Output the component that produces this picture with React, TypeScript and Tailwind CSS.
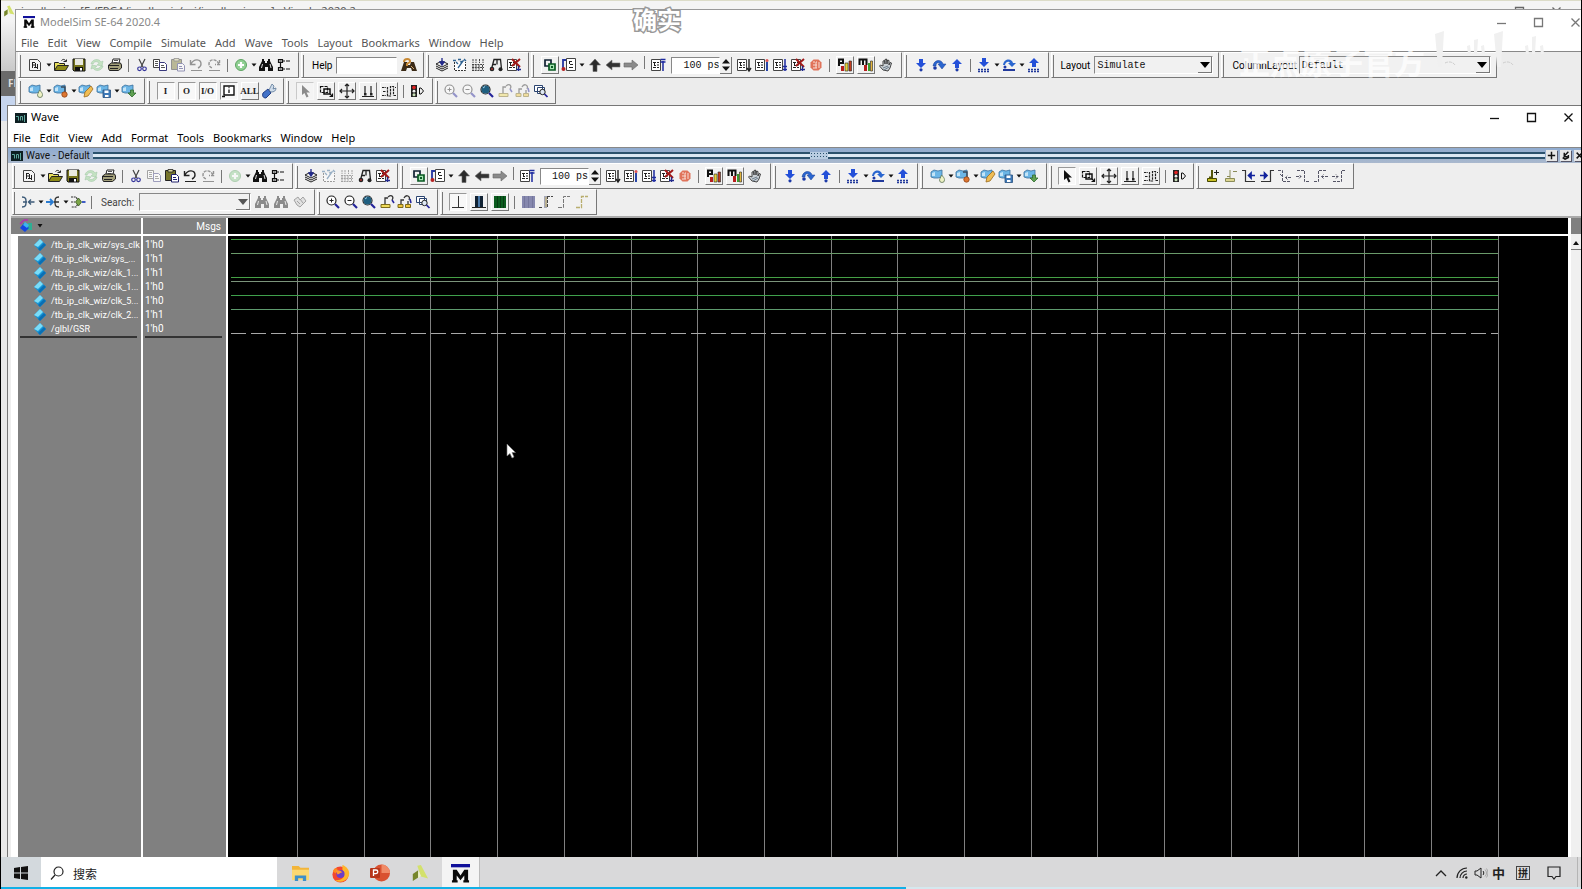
import type { ReactNode } from "react";

/* ── Icon drawings, all on a 16x16 grid ── */

const sheet = (
  <>
    <path d="M1.500 2.500h9v11h-9z" fill="#fff" stroke="#444" />
    <path d="M3 5.500h3M4 8.500h2M3 10.500h3M4.500 5v3M7 5.500h2M7 8h2M7 10.500h2" stroke="#222" fill="none" />
  </>
);

const screen = (
  <>
    <path d="M1 4l3-2 4 1 4-1v7l-4 1H4l-3-1z" fill="#6cb6e6" stroke="#3a6f9c" strokeWidth=".8" />
    <path d="M2 5l3-1v4L2 8z" fill="#c3e4f7" />
  </>
);

const lens = (
  <>
    <circle cx="6.500" cy="6.500" r="4.500" fill="#fff" stroke="#222" strokeWidth="1.200" />
    <path d="M10 10l4 4" stroke="#23239a" strokeWidth="2.200" />
  </>
);

const baseStep = <path d="M2 12.500h12M2 14.500h12" stroke="#223a9c" strokeWidth="1.500" strokeDasharray="2 1" />;

const icons: Record<string, ReactNode> = {
  new: (
    <>
      <path d="M2.500 2.500h8l3 3v8h-11z" fill="#f4f4f4" stroke="#444" />
      <path d="M5.500 5v6M5 5.500h3M5 8h3M8.500 6v5M10.500 7v5M7 10.500h3" stroke="#222" fill="none" />
    </>
  ),
  open: (
    <>
      <path d="M1.500 13V5.500h4l1 1h5V9" fill="#e8df5a" stroke="#222" />
      <path d="M1.500 13.500l3-5h11l-3 5z" fill="#8d8a17" stroke="#222" />
      <path d="M8.500 3.500c2-2 4-1 4 1M10.500 4.500h3v-2" fill="none" stroke="#222" />
    </>
  ),
  save: (
    <>
      <path d="M2 2h12v12H3l-1-1z" fill="#77751c" stroke="#111" />
      <path d="M4 2h8v6H4z" fill="#e9e9e0" />
      <path d="M4 10h8v4H4z" fill="#111" />
      <path d="M9 11h2v2.500H9z" fill="#fff" />
    </>
  ),
  refresh: (
    <>
      <path d="M2 7c1-5 8-6 10-2l2-1-1 5-5-1 2-1.500C9 4 5 4 4 7z" fill="#8ed08b" stroke="#4c9c55" strokeWidth=".6" />
      <path d="M14 9c-1 5-8 6-10 2l-2 1 1-4 5 1-2 1.500c1 2 5 1 6-1.500z" fill="#8ed08b" stroke="#4c9c55" strokeWidth=".6" />
    </>
  ),
  print: (
    <>
      <path d="M5 6l1-4h7l-1 4" fill="#fff" stroke="#222" />
      <path d="M7 3.500h4M6.500 5.500h4" stroke="#555" />
      <path d="M1.500 8l3-2h9l1 2v3l-3 2.500h-9l-1-2z" fill="#a29f7a" stroke="#222" />
      <path d="M2 8.500h10M3 11.500h8" stroke="#222" />
    </>
  ),
  cut: (
    <>
      <path d="M5 2l4 8M11 2l-4 8" stroke="#444" strokeWidth="1.200" />
      <circle cx="5.500" cy="11.800" r="1.800" fill="none" stroke="#33339a" strokeWidth="1.200" />
      <circle cx="10.500" cy="11.800" r="1.800" fill="none" stroke="#33339a" strokeWidth="1.200" />
    </>
  ),
  copy: (
    <>
      <path d="M1.500 2.500h6v8h-6z" fill="#fff" stroke="#444" />
      <path d="M7.500 5.500h5l2 2v6h-7z" fill="#fff" stroke="#39397d" />
      <path d="M3 4.500h3M3 6.500h3M3 8.500h3M9 8.500h3M9 10.500h4" stroke="#555" />
    </>
  ),
  paste: (
    <>
      <path d="M1.500 2.500h10v10h-10z" fill="#77752c" stroke="#222" />
      <path d="M4 1.500h5V4H4z" fill="#d6d19a" stroke="#222" strokeWidth=".8" />
      <path d="M7.500 6.500h5l2 2v5.500h-7z" fill="#fff" stroke="#22226d" />
      <path d="M9 9.500h3M9 11.500h4" stroke="#22226d" />
    </>
  ),
  undo: (
    <>
      <path d="M2.500 3v4.500h5M3 7c3-6 10-5 10 0 0 2-1 3-3 4" fill="none" stroke="#222" strokeWidth="1.400" />
      <path d="M3 13.500h11" stroke="#222" />
    </>
  ),
  redo: (
    <>
      <path d="M13.500 3v4.500H9M13 7C10 1 3 2 3 7c0 2 1 3 3 4" fill="none" stroke="#222" strokeWidth="1.400" strokeDasharray="3 1" />
      <path d="M3 13.500h11" stroke="#222" />
    </>
  ),
  plus: (
    <>
      <circle cx="8" cy="8" r="5.500" fill="#8fcf92" stroke="#5fa463" />
      <path d="M8 5v6M5 8h6" stroke="#fff" strokeWidth="2.200" />
    </>
  ),
  find: (
    <>
      <path d="M4 2h2v2h1v2h2V4h1V2h2v2l3 6v4h-5v-4H7v4H1v-4l3-6z" fill="#111" />
      <path d="M4.500 7l-1 4M12 7l1 4" stroke="#ddd" />
    </>
  ),
  tree: (
    <path
      d="M2.500 2.500h4v3h-4zM2.500 10.500h4v3h-4zM4.500 5.500v5M7 4h2M10 4h4M7 12h2M10 12h4M3.500 4h2M3.500 12h2"
      fill="none"
      stroke="#111"
      strokeWidth="1.200"
    />
  ),
  helpfind: (
    <>
      <path d="M3 5h3l1 3h2l1-3h3l3 9h-5l-1-3H6l-1 3H0z" fill="#3b2a16" />
      <path d="M3 5c0-4 7-4 6 0L6 7v2" fill="none" stroke="#c98a35" strokeWidth="2" />
      <path d="M10 9l3 3" stroke="#d3a76b" />
    </>
  ),
  compile: (
    <>
      <path d="M2 7l6-3 6 3-6 3z" fill="#eee" stroke="#222" />
      <path d="M2 9l6 3 6-3M2 11l6 3 6-3" fill="none" stroke="#222" />
      <path d="M8 1v5M6 5l2 3 2-3z" stroke="#222a8c" fill="#222a8c" strokeWidth="1.300" />
    </>
  ),
  compileall: (
    <>
      <path d="M2.500 5v8.500h11V5" fill="#fff" stroke="#333" strokeDasharray="2 1" />
      <path d="M1 3.500h3M6 2.500h3M12 2l2 2M8 5l3-1-5 7M4 5l2 2" fill="none" stroke="#2f6291" strokeWidth="1.300" />
    </>
  ),
  simulate: (
    <path
      d="M2 7.500h12M2 10.500h12M2 13.500h12M3 2v4M6 2v4M9.500 2v4M13 2v4M3 8v5M6 8v5M9 8v5M12.500 8v5"
      stroke="#444"
      fill="none"
      strokeDasharray="2 .7"
    />
  ),
  car: (
    <>
      <path d="M3.500 12L6 2.500h6.500l1 9.500M5 7.500h3M9 2.500v5" fill="#eee" stroke="#222" strokeWidth="1.300" />
      <circle cx="4" cy="12" r="2.300" fill="#222" />
      <circle cx="12.500" cy="12.300" r="2" fill="#222" />
      <circle cx="4" cy="12" r="1" fill="#a33" />
    </>
  ),
  stopdoc: (
    <>
      {sheet}
      <path d="M6 2l8 8M14 2L6 9" stroke="#a01818" strokeWidth="2" />
      <path d="M12.500 9v5M10 12.500h5" stroke="#222a8c" strokeWidth="1.300" />
    </>
  ),
  squares: (
    <>
      <path d="M3 3h6v6H3z" fill="none" stroke="#123" strokeWidth="1.700" />
      <path d="M7 7h6v6H7z" fill="#a7e4b3" stroke="#0a5a23" strokeWidth="1.700" />
      <path d="M9 9h2v2H9z" fill="#0a5a23" />
    </>
  ),
  restart: (
    <>
      <path d="M5.500 1.500h9v12h-9z" fill="#fff" stroke="#444" />
      <path d="M8 4.500h3M9 7.500h3M8 10.500h4M8.500 5v2" stroke="#222" />
      <path d="M5 3H2v8" fill="none" stroke="#2436a0" strokeWidth="1.800" />
      <circle cx="2.500" cy="12" r="2" fill="#b52222" />
    </>
  ),
  up: <path d="M8 2l5.500 6H10v6.500H6V8H2.500z" fill="#2b2b2b" stroke="#666" strokeWidth=".6" />,
  left: <path d="M1 8l6-5v3h8v4H7v3z" fill="#333" stroke="#777" strokeWidth=".6" />,
  right: <path d="M15 8L9 3v3H1v4h8v3z" fill="#8a8a8a" stroke="#666" strokeWidth=".6" />,
  doctop: (
    <>
      {sheet}
      <path d="M13 4v10M10.500 2.500h5M10.500 5h5" stroke="#1d2aa0" strokeWidth="1.500" />
    </>
  ),
  run: (
    <>
      {sheet}
      <path d="M13 2v11M11 11l2 3 2-3" stroke="#222" fill="none" strokeWidth="1.400" />
    </>
  ),
  cont: (
    <>
      {sheet}
      <path d="M13 5v9" stroke="#2a47a8" strokeWidth="2" />
      <circle cx="13" cy="3.500" r="1.500" fill="#d55" />
    </>
  ),
  runall: (
    <>
      {sheet}
      <path d="M13 2v12M11 9.500h4M11 12.500h4" stroke="#1d2aa0" strokeWidth="1.500" />
    </>
  ),
  stop: (
    <>
      <path d="M5.500 2.500h5l3 3v5l-3 3h-5l-3-3v-5z" fill="#e0735a" />
      <path d="M5 5h2M8 5h1M11 5v6M5 8h4M5 11h4M8 5v6" stroke="#f9ddd4" fill="none" />
    </>
  ),
  profile: (
    <>
      <path d="M4 9h3v5H4z" fill="#b71e1e" />
      <path d="M8 6h3v8H8z" fill="#e8d23a" stroke="#222" strokeWidth=".6" />
      <path d="M12 4h2.500v10H12z" fill="#c33d1f" stroke="#222" strokeWidth=".6" />
      <path d="M2 9V2.500h4V6H2" fill="none" stroke="#111" strokeWidth="2" />
    </>
  ),
  memory: (
    <>
      <path d="M6 8h3v6H6z" fill="#b71e1e" />
      <path d="M10 6h2v8h-2z" fill="#3c9a2d" />
      <path d="M12.500 4h2v10h-2z" fill="#e3b53a" stroke="#222" strokeWidth=".6" />
      <path d="M1.500 8V2.500h7V8M5 3v5" fill="none" stroke="#111" strokeWidth="2" />
    </>
  ),
  hand: (
    <>
      <path
        d="M6 13L2.500 9l1-1L6 9V4l1.500-.5L8 7V2.500L9.500 2l.5 5 .5-4 1.500.5V8l1-2.500 1.500.5L13 11l-2 3z"
        fill="#c9cfd4"
        stroke="#333"
        strokeWidth=".9"
      />
      <path d="M6 11l5-2M7 13l5-3" stroke="#6c7d8c" />
    </>
  ),
  stepin: (
    <>
      <path d="M6 2h4v4h3l-5 5-5-5h3z" fill="#2450d8" />
      <circle cx="8" cy="12.800" r="1.600" fill="#1d3aa8" />
    </>
  ),
  stepover: (
    <>
      <path d="M2 9C3 2 11 2 12 7h3l-4 5-4-5h2C8 5 5 5 5 9z" fill="#2a66cf" stroke="#1d3f94" strokeWidth=".5" />
      <circle cx="4" cy="11" r="1.800" fill="#1d3aa8" />
    </>
  ),
  stepout: (
    <>
      <path d="M8 2l5 5h-3v4H6V7H3z" fill="#2450d8" />
      <circle cx="8" cy="12.800" r="1.600" fill="#1d3aa8" />
    </>
  ),
  stepinc: (
    <>
      <path d="M6 1h4v4h3l-5 5-5-5h3z" fill="#2450d8" />
      {baseStep}
    </>
  ),
  stepoverc: (
    <>
      <path d="M2 8C3 1 11 1 12 6h3l-4 4-4-4h2C8 4 5 4 4 8z" fill="#2a66cf" />
      <circle cx="4" cy="10" r="1.500" fill="#1d3aa8" />
      <path d="M2 13h12" stroke="#223a9c" strokeWidth="2" />
    </>
  ),
  stepoutc: (
    <>
      <path d="M8 1l5 5h-3v4H6V6H3z" fill="#2450d8" />
      {baseStep}
    </>
  ),
  winnew: (
    <>
      {screen}
      <path d="M11.500 7c3 3 3 4 3 5a2.500 2.500 0 01-5 0c0-1 1-2 2-5z" fill="#eef2c4" stroke="#5d7355" strokeWidth=".8" />
    </>
  ),
  windel: (
    <>
      {screen}
      <path d="M8 4h4v5" fill="none" stroke="#36495c" strokeWidth="1.500" />
      <circle cx="11.500" cy="11.500" r="2.700" fill="#dd7631" stroke="#8f4215" strokeWidth=".8" />
    </>
  ),
  winedit: (
    <>
      {screen}
      <path d="M6 14l1-5 6-6 2 3-5 7z" fill="#f0bd54" stroke="#9a6b1d" strokeWidth=".8" />
    </>
  ),
  winsave: (
    <>
      {screen}
      <path d="M7 7h7.500v7.500H7z" fill="#3d79b8" stroke="#28517d" strokeWidth=".8" />
      <path d="M8.500 7.500h4v2.500h-4zM9 12h3.500v2H9z" fill="#fff" />
    </>
  ),
  winload: (
    <>
      {screen}
      <path d="M9.500 7h3v3H15l-4 4-4-4h2.500z" fill="#5fa052" stroke="#2f6b2c" strokeWidth=".8" />
    </>
  ),
  inout: (
    <>
      <path d="M3 3h10v9H3z" fill="#fff" stroke="#111" strokeWidth="1.400" />
      <path d="M8 6.500v3.500M7.500 4.500h1M1 13.500h3" stroke="#111" strokeWidth="1.300" />
    </>
  ),
  wrench: (
    <>
      <path d="M2 10l5-4 3 4-5 5c-3 0-4-2-3-5z" fill="#4272c8" stroke="#233f86" />
      <path d="M8 7l3-6 2 2-1 3 3-1c0 3-2 4-5 4z" fill="#cfdcea" stroke="#5b7797" strokeWidth=".8" />
    </>
  ),
  clean: (
    <path
      d="M2 6l4-3 2 3 3-3 3 4-6 6-3-2zM5 7l3 3M8 5l3 4"
      fill="#ccc"
      stroke="#444"
    />
  ),
  arrow: <path d="M5 2v10l2.500-2 2 4.500 2-1-2-4H13z" fill="#111" />,
  zoombox: (
    <>
      <path d="M2.500 3.500h7v6h-7z" fill="none" stroke="#111" strokeWidth="1.200" strokeDasharray="3 1" />
      <path d="M6 6h6v5H6z" fill="none" stroke="#111" strokeWidth="1.500" />
      <path d="M12 11l2.500 2.500M14.500 10.500v3h-3" stroke="#111" fill="none" strokeWidth="1.200" />
    </>
  ),
  pan: (
    <path
      d="M8 1v14M1 8h14M6 3l2-2 2 2M6 13l2 2 2-2M3 6L1 8l2 2M13 6l2 2-2 2"
      stroke="#222"
      strokeWidth="1.200"
      fill="none"
    />
  ),
  cursors: (
    <>
      <path d="M5 3v8M11 3v8M2 13.500h12" stroke="#222" strokeWidth="1.200" />
      <path d="M4 10h2.500v2.500H4zM10 10h2.500v2.500H10z" fill="#222" />
    </>
  ),
  edges: (
    <path
      d="M1 4.500h4M1 12.500h4M6.500 4v9h3V3.500h3v9M2 8.500h3M14 4.500h1M13 12.500h2"
      stroke="#222"
      strokeWidth="1.200"
      fill="none"
      strokeDasharray="2.500 .8"
    />
  ),
  traffic: (
    <>
      <path d="M2 2h6v12H2z" fill="#222" />
      <circle cx="5" cy="4.500" r="1.800" fill="#e02222" />
      <circle cx="5" cy="8.200" r="1.400" fill="#eee" />
      <circle cx="5" cy="11.800" r="1.500" fill="#c7dfb5" />
      <path d="M10.500 5h1.500l2.500 3-2.500 3h-1.500z" fill="none" stroke="#111" />
    </>
  ),
  zoomin: (
    <>
      {lens}
      <path d="M6.500 4.500v4M4.500 6.500h4" stroke="#222" />
    </>
  ),
  zoomout: (
    <>
      {lens}
      <path d="M4.500 6.500h4" stroke="#222" />
    </>
  ),
  zoomfull: (
    <>
      {lens}
      <circle cx="6.500" cy="6.500" r="4" fill="#1f5f80" />
      <path d="M4 5l2-1.500" stroke="#a9d4ea" />
    </>
  ),
  zoomcur: (
    <>
      <path d="M2 10.500h9v3H2z" fill="#f0dc5a" stroke="#7d6b18" />
      <path d="M6 10V4h3M9 3c4-3 6 0 4 3" fill="none" stroke="#333" strokeWidth="1.300" />
      <path d="M13 6l2 3" stroke="#23239a" strokeWidth="1.500" />
    </>
  ),
  zoomcur2: (
    <>
      <path d="M1 10.500h5v3H1zM8.500 10.500h5v3h-5z" fill="#f0c63c" stroke="#7d6b18" />
      <path d="M4 10V6h3M11 10V7M7 4c2-4 7-2 5 2" fill="none" stroke="#333" strokeWidth="1.300" />
      <path d="M13 5l1 4" stroke="#23239a" strokeWidth="1.500" />
    </>
  ),
  zoomwin: (
    <>
      <path d="M1.500 2.500h8v6h-8zM4.500 4.500h7v6h-7z" fill="#fff" stroke="#2b4470" />
      <circle cx="9.500" cy="9" r="2.700" fill="#dfe9f5" stroke="#222" />
      <path d="M11.500 11l3 3" stroke="#23239a" strokeWidth="1.700" />
    </>
  ),
  expandl: (
    <path
      d="M2 3c4 0 4 2 4 5s0 5-4 5M3 8h4M14.500 8H9M11 5.500L8.500 8l2.500 2.500"
      fill="none"
      stroke="#3c5a78"
      strokeWidth="1.400"
    />
  ),
  expandr: (
    <>
      <path d="M1 8h6M5 5l3 3-3 3" fill="none" stroke="#2a7bd0" strokeWidth="1.800" />
      <path d="M14 3c-4 0-4 2-4 5s0 5 4 5M9 8h5" fill="none" stroke="#333" strokeWidth="1.300" />
    </>
  ),
  expandb: (
    <>
      <path d="M1 3h5l3 5-3 5H1M1 8h4" fill="none" stroke="#333" strokeWidth="1.200" strokeDasharray="2 .7" />
      <path d="M8.500 4l3 4-3 4-3-4z" fill="#7ba548" stroke="#35541c" strokeWidth=".8" />
      <path d="M12 8h3.500" stroke="#2a4bc0" strokeWidth="1.800" />
    </>
  ),
  line: <path d="M8.500 2v11M2 13.500h12" stroke="#333" />,
  barblue: (
    <>
      <path d="M4 2h8v11H4z" fill="#123" />
      <path d="M7 2h2v11H7z" fill="#4a78a8" />
      <path d="M1 13.500h14" stroke="#222" />
    </>
  ),
  bargreen: (
    <>
      <path d="M2 2h12v12H2z" fill="#0b5c1e" />
      <path d="M5.500 2v12M8.500 2v12M11.500 2v12" stroke="#063d12" />
    </>
  ),
  shade: (
    <>
      <path d="M2 2h13v12H2z" fill="#8688ae" />
      <path d="M4.500 2v12M8.500 2v12M12.500 2v12" stroke="#74769c" />
    </>
  ),
  half: (
    <>
      <path d="M6 2h3v12H6z" fill="#a5a7b8" />
      <path d="M1 13.500h4M9.500 2v12M9 2.500h6" stroke="#444" fill="none" strokeDasharray="3 1" />
      <path d="M8 3v10" stroke="#cbb668" />
    </>
  ),
  rise: <path d="M2 13.500h5.500v-11H14" stroke="#777" fill="none" strokeDasharray="4 1" />,
  risey: <path d="M2 13.500h5.500v-11H14" stroke="#b9ae6f" fill="none" strokeWidth="1.300" strokeDasharray="4 1" />,
  curadd: (
    <>
      <path d="M2.500 10.500h9v3h-9z" fill="#c8bf23" stroke="#444600" />
      <path d="M7 2v8M4 9.500h3" stroke="#55560a" strokeWidth="2" fill="none" />
      <path d="M11.500 2v5M9 4.500h5" stroke="#222" />
    </>
  ),
  curdel: (
    <>
      <path d="M2.500 10.500h9v3h-9z" fill="#ddd691" stroke="#8b8c5a" />
      <path d="M7 2v8M10 3.500h4M4 8.500h3" stroke="#8b8c5a" fill="none" />
    </>
  ),
  prevedge: (
    <>
      <path d="M1 2.500h3.500v11H14" fill="none" stroke="#333" strokeWidth="1.200" />
      <path d="M14 7.500H9M10 5L7.500 7.500 10 10z" stroke="#11229c" fill="#11229c" strokeWidth="1.700" />
    </>
  ),
  nextedge: (
    <>
      <path d="M2 13.500h9.500v-11H15" fill="none" stroke="#333" strokeWidth="1.200" />
      <path d="M1 7.500h5M5.500 5L8 7.500 5.500 10z" stroke="#11229c" fill="#11229c" strokeWidth="1.700" />
    </>
  ),
  fallprev: <path d="M1 2.500h4.500v11H14M3 6l3 3M14 9.500H8.500l2-2M8.500 9.500l2 2" fill="none" stroke="#556" strokeDasharray="3 1" />,
  fallnext: <path d="M2 2.500h7.500v11H15M1 8.500h5l-2-2M6 8.500l-2 2" fill="none" stroke="#556" strokeDasharray="3 1" />,
  riseprev: <path d="M1 13.500h4.500v-11H14M15 8.500H8.500l2-2M8.500 8.500l2 2" fill="none" stroke="#556" strokeDasharray="3 1" />,
  risenext: <path d="M2 13.500h8.500v-11H15M1 8.500h6l-2-2M7 8.500l-2 2" fill="none" stroke="#556" strokeDasharray="3 1" />,
};

const toggleText: Record<string, string> = { I: "I", O: "O", IO: "I/O", ALL: "ALL" };

/* ── Toolbar pieces ── */

// Items are space separated: "|" separator, "v" drop-down arrow, and
// name:state where state is dim, up (raised) or down (sunken).
function Tools({ items }: { items: string }) {
  return (
    <>
      {items.split(" ").map((item, i) => {
        if (item === "|") {
          return (
            <span key={i} className="flex w-[9px] shrink-0 justify-center">
              <span className="h-[13px] w-px bg-[#777]" />
            </span>
          );
        }
        if (item === "v") {
          return (
            <button key={i} aria-label="More" className="flex w-[7px] shrink-0 justify-center">
              <svg viewBox="0 0 6 4" className="h-1 w-1.5">
                <path d="M.5 .5h5L3 3.500z" fill="#111" />
              </svg>
            </button>
          );
        }
        const [name, ...states] = item.split(":");
        const dim = states.includes("dim") ? "opacity-45" : "";
        let box = name === "new" ? "w-5" : "w-[18px]";
        let face = "";
        if (states.includes("up")) {
          box = "w-[21px]";
          face = "border border-t-white border-l-white border-r-[#777] border-b-[#777]";
        }
        if (states.includes("down")) {
          box = "w-[21px]";
          face = "border border-t-[#999] border-l-[#999] border-r-white border-b-white bg-[#f8f8f8]";
        }
        return (
          <button key={i} aria-label={name} className={`flex h-[18px] shrink-0 items-center justify-center ${box}`}>
            <span className={`flex h-[18px] w-[18px] items-center justify-center ${face} ${dim}`}>
              {toggleText[name] ? (
                <span className="font-['Liberation_Serif',serif] text-[9px] leading-none font-bold text-[#222]">{toggleText[name]}</span>
              ) : (
                <svg viewBox="0 0 16 16" className="h-4 w-4 shrink-0" fill="none">
                  {icons[name]}
                </svg>
              )}
            </span>
          </button>
        );
      })}
    </>
  );
}

function Group({ children, className = "pl-1 pr-[5px]" }: { children: ReactNode; className?: string }) {
  return (
    <div className="flex h-[26px] shrink-0 border border-t-white border-r-[#777] border-b-[#777] border-l-white bg-[#f1f1f1]">
      <span className="mt-0.5 ml-px w-px bg-[#777]" />
      <div className={`flex items-center ${className}`}>{children}</div>
    </div>
  );
}

function Combo({ id, value, width, disabled }: { id: string; value: string; width: string; disabled?: boolean }) {
  return (
    <span className={`relative flex h-[18px] border border-t-[#888] border-r-white border-b-white border-l-[#888] ${width}`}>
      <select
        id={id}
        disabled={disabled}
        className="h-4 w-full appearance-none bg-[#f1f1f1] pt-px pl-0.5 font-['Liberation_Mono',monospace] text-[10px] leading-4 text-[#111]"
      >
        <option>{value}</option>
      </select>
      <span className="pointer-events-none absolute inset-y-0 right-0 flex w-[14px] items-center justify-center border-r border-b border-[#777] bg-[#f1f1f1]">
        <svg viewBox="0 0 10 6" className="h-1.5 w-2.5">
          <path d="M0 0h10L5 6z" fill={disabled ? "#555" : "#000"} />
        </svg>
      </span>
    </span>
  );
}

function RunLength({ label }: { label: string }) {
  return (
    <span className="mr-[3px] ml-1 flex h-[17px] items-center">
      <input
        aria-label={label}
        defaultValue="100 ps"
        className="h-full w-[49px] border border-t-[#888] border-r-white border-b-white border-l-[#888] bg-white text-right font-['Liberation_Mono',monospace] text-[10px] text-[#111]"
      />
      <button aria-label="Change run length" className="flex h-full w-3 items-center justify-center border-r border-b border-[#777]">
        <svg viewBox="0 0 8 14" className="h-[14px] w-2">
          <path d="M0 5.500h8L4 1zM0 8.500h8L4 13z" fill="#111" />
        </svg>
      </button>
    </span>
  );
}

function RunGroup({ label }: { label: string }) {
  return (
    <Group className="pr-[7px] pl-[5px]">
      <Tools items="squares:up restart v" />
      <span className="ml-px flex">
        <Tools items="up left right | doctop" />
      </span>
      <RunLength label={label} />
      <Tools items="run cont runall stopdoc stop | profile:up memory:up hand" />
    </Group>
  );
}

function StepGroup() {
  return (
    <Group className="px-[5px]">
      <Tools items="stepin stepover stepout | stepinc v stepoverc v stepoutc" />
    </Group>
  );
}

function LayoutGroup() {
  return (
    <Group className="px-1.5">
      <Tools items="winnew v windel v winedit winsave v winload" />
    </Group>
  );
}

function MenuBar({ items, className }: { items: string[]; className: string }) {
  return (
    <nav className={`flex bg-white pl-[5px] text-[11px] ${className}`}>
      {items.map((item) => (
        <button key={item}>{item}</button>
      ))}
    </nav>
  );
}

function WindowButtons({ className }: { className: string }) {
  return (
    <div className={`ml-auto flex gap-[11px] ${className}`}>
      {[
        ["Minimize", "M1 6.500h9"],
        ["Maximize", "M1.500 1.500h8v8h-8z"],
        ["Close", "M1.500 1.500l8 8M9.500 1.500l-8 8"],
      ].map(([label, d]) => (
        <button key={label} aria-label={label} className="flex h-5 w-[26px] items-center justify-center">
          <svg viewBox="0 0 11 11" className="h-[11px] w-[11px]" fill="none" stroke="currentColor" strokeWidth="1.300">
            <path d={d} />
          </svg>
        </button>
      ))}
    </div>
  );
}

function ModelSimLogo({ className }: { className: string }) {
  return (
    <svg viewBox="0 0 20 20" className={className}>
      <path d="M0 0h20v3.500H0z" fill="#10109a" />
      <path d="M2 19V6h4l4 6 4-6h4v13h-4v-7l-4 5-4-5v7z" fill="#0a0a0a" />
      <path d="M1 17h6v2.500H1zM13 17h6v2.500h-6z" fill="#0a0a0a" />
    </svg>
  );
}

function WaveLogo() {
  return (
    <svg viewBox="0 0 12 12" className="h-3 w-3 shrink-0">
      <path d="M0 1h12v10H0z" fill="#0d1f22" />
      <path d="M1 4.500h2.500v4M5.500 8.500v-4h2v4M9.500 3v7" fill="none" stroke="#5da79b" />
    </svg>
  );
}

function VivadoLogo({ className }: { className: string }) {
  return (
    <svg viewBox="0 0 20 20" className={className}>
      <path d="M2 11l6-4v8l-6 4z" fill="#76862b" />
      <path d="M7 2l4-1 8 15-8-2z" fill="#d3e16c" />
      <path d="M8 7l3 6-3 3z" fill="#eef3c4" />
    </svg>
  );
}

/* ── Windows ── */

function VivadoWindow() {
  return (
    <section className="absolute inset-0 bg-[#e9e9e9]">
      <header className="flex h-[20px] items-center bg-[#f4f4f4] pl-0.5 text-[11px] text-[#555]">
        <VivadoLogo className="h-3 w-3" />
        <span className="ml-1.5 whitespace-pre">ip_clk_wiz - [E:/FPGA/ip_clk_wiz/prj/ip_clk_wiz.xpr] - Vivado 2020.2</span>
        <WindowButtons className="mr-3 text-[#666]" />
      </header>
      <div className="h-[50px] bg-linear-to-b from-[#f4f4f4] to-[#c9c9c9]" />
      <div className="h-[25px] bg-[#6a6a6a] pl-[7px] text-[10px] leading-6 font-bold text-[#ddd]">FLOW</div>
      <div className="h-[25px] bg-[#c6d5ee]" />
    </section>
  );
}

const mainMenu = ["File", "Edit", "View", "Compile", "Simulate", "Add", "Wave", "Tools", "Layout", "Bookmarks", "Window", "Help"];

function MainWindow() {
  return (
    <section className="absolute top-2 -right-2 bottom-0 left-[14px] border border-[#999] bg-[#ececec]">
      <header className="flex h-6 items-center bg-white pl-[7px] text-[11px] text-[#888]">
        <ModelSimLogo className="h-3 w-3" />
        <span className="ml-[5px]">ModelSim SE-64 2020.4</span>
        <WindowButtons className="text-[#777]" />
      </header>
      <MenuBar items={mainMenu} className="gap-[9px] leading-[17px] text-[#555]" />
      <div className="border-t border-[#888] pl-0.5 font-[Roboto,sans-serif]">
        <div className="flex gap-0.5">
          <Group>
            <Tools items="new v open save refresh:dim print | cut copy paste:dim undo:dim redo:dim | plus v find tree" />
          </Group>
          <Group>
            <label htmlFor="help" className="mr-1 ml-1 text-[10px] text-black">
              Help
            </label>
            <input id="help" className="mr-[3px] h-[17px] w-[61px] border border-t-[#888] border-r-white border-b-white border-l-[#888] bg-white text-[10px]" />
            <Tools items="helpfind" />
          </Group>
          <Group>
            <Tools items="compile compileall simulate car stopdoc" />
          </Group>
          <RunGroup label="Run length" />
          <StepGroup />
          <Group>
            <label htmlFor="layout" className="mr-1 ml-0.5 text-[10px] text-black">
              Layout
            </label>
            <Combo id="layout" value="Simulate" width="w-[119px]" />
          </Group>
          <Group>
            <label htmlFor="columns" className="mr-0.5 ml-1 text-[10px] text-black">
              ColumnLayout
            </label>
            <Combo id="columns" value="Default" width="w-[192px]" />
          </Group>
        </div>
        <div className="flex gap-0.5">
          <LayoutGroup />
          <Group className="px-[5px]">
            <Tools items="I:down O:down IO:down inout:down ALL:up wrench" />
          </Group>
          <Group className="pr-1.5 pl-[5px]">
            <Tools items="arrow:down:dim zoombox:up pan:up cursors:up edges:up | traffic" />
          </Group>
          <Group>
            <Tools items="zoomin:dim zoomout:dim zoomfull zoomcur:dim zoomcur2:dim zoomwin" />
          </Group>
        </div>
      </div>
    </section>
  );
}

const waveMenu = ["File", "Edit", "View", "Add", "Format", "Tools", "Bookmarks", "Window", "Help"];

const signals = [
  { name: "/tb_ip_clk_wiz/sys_clk", value: "1'h0" },
  { name: "/tb_ip_clk_wiz/sys_...", value: "1'h1" },
  { name: "/tb_ip_clk_wiz/clk_1...", value: "1'h1" },
  { name: "/tb_ip_clk_wiz/clk_1...", value: "1'h0" },
  { name: "/tb_ip_clk_wiz/clk_5...", value: "1'h0" },
  { name: "/tb_ip_clk_wiz/clk_2...", value: "1'h1" },
  { name: "/glbl/GSR", value: "1'h0" },
];

const traces = [
  { y: 3, color: "#3fa03f" },
  { y: 17, color: "#6a9a6a" },
  { y: 41, color: "#45a045" },
  { y: 45, color: "#7b947b" },
  { y: 59, color: "#3fa04c" },
  { y: 73, color: "#5e9a6e" },
];

const gridLines = Array.from({ length: 19 }, (_, i) => Math.round(69 + i * 66.7));

function WaveCanvas() {
  return (
    <svg className="h-full w-full" shapeRendering="crispEdges">
      {gridLines.map((x) => (
        <path key={x} d={`M${x}.5 0V2000`} stroke="#808080" />
      ))}
      {traces.map((t) => (
        <path key={t.y} d={`M3 ${t.y}.5H1270`} stroke={t.color} />
      ))}
      <path d="M3 97.500H1270" stroke="#a8a8a8" strokeDasharray="15 5" />
    </svg>
  );
}

function SignalPane() {
  return (
    <div className="flex shrink-0 font-[Roboto,sans-serif] text-[10px] leading-[14px] text-white">
      <div className="flex w-[130px] flex-col">
        <div className="flex h-4 items-center gap-1 bg-[#808080] pl-2">
          <svg viewBox="0 0 14 14" className="h-[14px] w-[14px]">
            <path d="M9 4h4v7H8z" fill="#2fae93" />
            <path d="M5 4l5 5-4 4-5-4z" fill="#1446e0" />
            <path d="M6 3l4 3-2 3-4-3z" fill="#3db5ef" />
            <path d="M1 5l4-4M5 1h4" stroke="#b02fae" strokeWidth="1.500" />
          </svg>
          <svg viewBox="0 0 6 4" className="h-1 w-1.5">
            <path d="M.5 0h5L3 3.500z" fill="#111" />
          </svg>
        </div>
        <div className="mt-0.5 flex flex-1 bg-[#808080]">
          <div className="w-[7px] bg-white" />
          <ul className="min-w-0 flex-1 pt-0.5">
            {signals.map((s, i) => (
              <li key={i} className="flex items-center pl-4 text-[9px] leading-[14px] whitespace-nowrap">
                <svg viewBox="0 0 12 12" className="mr-[5px] h-3 w-3 shrink-0">
                  <path d="M6 0l6 6-6 6-6-6z" fill="#1496d8" />
                  <path d="M6 0l3 3-5 5-4-2z" fill="#7bdcf7" />
                  <path d="M12 6l-6 6-2-2 6-6z" fill="#0a6fb4" />
                </svg>
                {s.name}
              </li>
            ))}
            <li className="mr-1 ml-0.5 h-0.5 bg-[#333]" />
          </ul>
        </div>
      </div>
      <div className="ml-0.5 flex w-[83px] flex-col">
        <div className="h-4 bg-[#808080] pr-[5px] text-right leading-[18px]">Msgs</div>
        <div className="mt-0.5 flex-1 bg-[#808080] pt-0.5">
          {signals.map((s, i) => (
            <div key={i} className="pl-0.5">
              {s.value}
            </div>
          ))}
          <div className="mr-1 ml-0.5 h-0.5 bg-[#333]" />
        </div>
      </div>
    </div>
  );
}

function WaveWindow() {
  return (
    <section className="absolute top-[104px] right-0 bottom-0 left-1.5 flex flex-col border-t border-l border-[#777] bg-[#eeeeee]">
      <header className="flex h-[23px] items-center bg-white pl-[7px] text-[11px] text-black">
        <WaveLogo />
        <span className="ml-1">Wave</span>
        <WindowButtons className="text-[#111]" />
      </header>
      <MenuBar items={waveMenu} className="gap-[9px] leading-[18px] text-black" />
      <div className="flex h-4 items-center border-t border-[#888] bg-linear-to-b from-[#8fabd0] to-[#a9b8cd] pl-[3px]">
        <WaveLogo />
        <span className="ml-[3px] font-[Roboto,sans-serif] text-[10px] text-[#111]">Wave - Default</span>
        <div className="ml-[3px] flex h-[7px] flex-1 items-stretch">
          <span className="flex-1 border-y-2 border-[#2b526e] bg-[#dbe8f4]" />
          <span className="w-[18px] bg-[radial-gradient(#2b526e_1px,#b9cde2_1px)] bg-size-[3px_3px]" />
          <span className="flex-1 border-y-2 border-[#2b526e] bg-[#dbe8f4]" />
        </div>
        <div className="-mr-1 flex gap-0.5">
          {[
            ["Add", "M5.500 1v9M1 5.500h9"],
            ["Undock", "M9 1L4 6M4 2v5h4M2 8l3 2 4-2V5"],
            ["Close pane", "M2 2l7 7M9 2l-7 7"],
          ].map(([label, d]) => (
            <button key={label} aria-label={label} className="ml-px flex h-[11px] w-[11px] items-center justify-center bg-[#e6e6e6] shadow-[1px_1px_#556]">
              <svg viewBox="0 0 11 11" className="h-[9px] w-[9px]" fill="none" stroke="#111" strokeWidth="1.800">
                <path d={d} />
              </svg>
            </button>
          ))}
        </div>
      </div>
      <div className="pb-px pl-1 font-[Roboto,sans-serif]">
        <div className="flex gap-0.5">
          <Group>
            <Tools items="new v open save refresh:dim print | cut copy:dim paste undo redo:dim | plus:dim v find tree" />
          </Group>
          <Group>
            <Tools items="compile compileall:dim simulate:dim car stopdoc" />
          </Group>
          <RunGroup label="Wave run length" />
          <StepGroup />
          <LayoutGroup />
          <Group>
            <Tools items="arrow:down zoombox:up pan:up cursors:up edges:up | traffic" />
          </Group>
          <Group className="px-[5px]">
            <Tools items="curadd curdel prevedge nextedge fallprev fallnext riseprev risenext" />
          </Group>
        </div>
        <div className="flex gap-0.5">
          <Group>
            <Tools items="expandl v expandr v expandb |" />
            <label htmlFor="search" className="mx-[5px] text-[10px] text-[#444]">
              Search:
            </label>
            <Combo id="search" value="" width="w-[112px]" disabled />
            <span className="ml-0.5 flex gap-px">
              <Tools items="find:dim find:dim clean:dim" />
            </span>
          </Group>
          <Group>
            <Tools items="zoomin zoomout zoomfull zoomcur zoomcur2 zoomwin" />
          </Group>
          <Group>
            <Tools items="line:down barblue:up bargreen:up | shade half rise risey" />
          </Group>
        </div>
      </div>
      <div className="ml-[3px] flex min-h-0 flex-1 border-t-2 border-[#aaa] bg-white">
        <SignalPane />
        <div className="ml-0.5 flex min-w-0 flex-1 flex-col">
          <div className="h-4 bg-black" />
          <div className="mt-0.5 min-h-0 flex-1 bg-black">
            <WaveCanvas />
          </div>
        </div>
        <div className="ml-[3px] flex w-2.5 flex-col bg-[#f0f0f0]">
          <div className="h-4 bg-[#808080]" />
          <button aria-label="Scroll up" className="mt-0.5 flex h-[14px] items-center justify-center border-b border-[#777]">
            <svg viewBox="0 0 6 4" className="h-1 w-1.5">
              <path d="M0 4h6L3 0z" fill="#111" />
            </svg>
          </button>
        </div>
      </div>
    </section>
  );
}

/* ── Taskbar ── */

function Taskbar() {
  return (
    <footer className="relative flex h-8 shrink-0 items-stretch bg-[#d9d9da]">
      <button aria-label="Start" className="flex w-10 items-center justify-center bg-[#d3d9dd]">
        <svg viewBox="0 0 14 14" className="h-[14px] w-[14px]">
          <path d="M0 2l6-1v5.500H0zM7 .9L14 0v6.500H7zM0 7.500h6V13l-6-1zM7 7.500h7V14l-7-.9z" fill="#111" />
        </svg>
      </button>
      <label className="flex w-[236px] items-center bg-white pl-[9px]">
        <svg viewBox="0 0 14 14" className="h-[14px] w-[14px]" fill="none" stroke="#222" strokeWidth="1.200">
          <circle cx="8.500" cy="5.500" r="4.500" />
          <path d="M5 9L1 13.500" />
        </svg>
        <input aria-label="搜索" placeholder="搜索" className="mt-1 ml-[9px] w-40 text-[12px] placeholder:text-[#222]" />
      </label>
      <button aria-label="Files" className="ml-[3px] flex w-10 items-center justify-center">
        <svg viewBox="0 0 20 18" className="h-[17px] w-[19px]">
          <path d="M1 1h7l2 2h9v13H1z" fill="#f2b53a" />
          <path d="M1 5h18v11H1z" fill="#fbd871" />
          <path d="M4 17v-6h12v6h-3.500v-3h-5v3z" fill="#3e8fc9" />
        </svg>
      </button>
      <button aria-label="Firefox" className="flex w-10 items-center justify-center">
        <svg viewBox="0 0 20 20" className="h-[19px] w-[19px]">
          <circle cx="10" cy="11" r="8.500" fill="#f4472f" />
          <path d="M12 1c6 2 9 8 6 13-3 5-9 6-14 3 9 1 12-5 8-11z" fill="#ffb52b" />
          <path d="M2 8c1-4 3-4 5-3L5 10z" fill="#ff8a1f" />
          <circle cx="10" cy="10.500" r="4.300" fill="#6d3ec9" />
          <path d="M5 7c3-1 5 0 7 2-3 0-3 2-5 2z" fill="#ff9a32" />
        </svg>
      </button>
      <button aria-label="PowerPoint" className="flex w-10 items-center justify-center">
        <svg viewBox="0 0 20 18" className="h-[18px] w-5">
          <circle cx="11.500" cy="9" r="8.500" fill="#d9512f" />
          <path d="M11.500.5a8.500 8.500 0 018.500 8.500h-8.500z" fill="#f08a66" />
          <rect y="4" width="10" height="10" rx="1" fill="#b7361a" />
          <path d="M3.500 12V6H6a1.800 1.800 0 010 3.600H3.500" fill="none" stroke="#fff" strokeWidth="1.300" />
        </svg>
      </button>
      <button aria-label="Vivado" className="flex w-10 items-center justify-center">
        <VivadoLogo className="h-[18px] w-[18px]" />
      </button>
      <button aria-label="ModelSim" className="ml-0.5 flex w-[38px] items-center justify-center border-r border-[#bbb] bg-[#f4f4f4]">
        <ModelSimLogo className="h-[19px] w-[19px]" />
      </button>
      <div className="mr-4 ml-auto flex items-center text-[#222]">
        <svg viewBox="0 0 12 8" className="mr-[9px] h-2 w-3" fill="none" stroke="currentColor" strokeWidth="1.300">
          <path d="M1 7l5-5 5 5" />
        </svg>
        <svg viewBox="0 0 12 12" className="mr-1.5 h-3 w-3" fill="none" stroke="currentColor" strokeWidth="1.200">
          <path d="M1 11A10 10 0 0111 1M4 11a7 7 0 017-7M7 11a4 4 0 014-4" />
          <circle cx="10.300" cy="10.500" r="1.200" fill="currentColor" stroke="none" />
        </svg>
        <svg viewBox="0 0 14 12" className="mr-1 h-3 w-[14px]" fill="none" stroke="currentColor">
          <path d="M1 4h2l4-3v10L3 8H1zM9 4c1 1 1 3 0 4" />
          <path d="M11 2.500c2 2 2 5 0 7M12.500 1.500c2 3 2 6 0 9" stroke="#999" strokeWidth=".8" />
        </svg>
        <span className="text-[13px] leading-none font-bold">中</span>
        <span className="ml-[11px] flex h-[14px] w-[14px] items-center justify-center border border-[#444] text-[10px] leading-none font-bold">
          拼
        </span>
        <button aria-label="Notifications" className="ml-[17px]">
          <svg viewBox="0 0 14 14" className="h-[14px] w-[14px]" fill="none" stroke="currentColor" strokeWidth="1.200">
            <path d="M1 1h12v9.500H9L7 13l-2-2.500H1z" />
          </svg>
        </button>
      </div>
      <span className="mr-[3px] w-px bg-[#b5b5b5]" />
      <div className="absolute inset-x-0 bottom-0 h-0.5 bg-[#d5e8ee]">
        <div className="h-full w-[57.3%] bg-[#12b0e6]" />
      </div>
    </footer>
  );
}

/* ── Video overlay: caption, channel mark, pointer ── */

function Overlay() {
  return (
    <div className="pointer-events-none absolute inset-0">
      <p className="absolute top-1 left-0 w-full pr-[268px] text-center text-[24px] leading-8 font-bold text-white [-webkit-text-stroke:3px_#999] [paint-order:stroke_fill]">
        确实
      </p>
      <p className="absolute top-[44px] right-[156px] text-[31px] leading-9 font-bold text-white/75">正点原子官方</p>
      <svg viewBox="0 0 114 50" className="absolute top-[30px] right-[32px] h-[50px] w-[114px]" fill="#f0f0f0">
        <path d="M0 4l9-3-2 36H3zM59 4l9-3-2 36h-4z" />
        <path d="M32 16l3-1 1 9h-3zM39 10l4-1-1 16h-3zM46 16l3-1 1 9h-3zM90 16l3-1 1 9h-3zM97 7l4-1-1 18h-3zM105 16l3-1 1 9h-3z" />
        <path d="M10 33c4-2 8-1 10 2M68 33c4-2 8-1 10 2" fill="none" stroke="#ccc" strokeDasharray="3 1" />
      </svg>
      <svg viewBox="0 0 10 16" className="absolute top-[443px] left-[505px] h-4 w-2.5">
        <path d="M1 1v12l3-2.500 2 4.500 2-1-2-4.500h3.500z" fill="#fff" stroke="#777" strokeWidth=".6" />
      </svg>
    </div>
  );
}

export default function App() {
  return (
    <div className="relative flex h-screen flex-col overflow-hidden border-x border-black bg-[#d9d9da] font-['Noto_Sans','Noto_Sans_CJK_SC',sans-serif]">
      <main className="relative min-h-0 flex-1 overflow-hidden border-t border-[#dcdcc8]">
        <VivadoWindow />
        <MainWindow />
        <WaveWindow />
      </main>
      <Taskbar />
      <Overlay />
    </div>
  );
}
